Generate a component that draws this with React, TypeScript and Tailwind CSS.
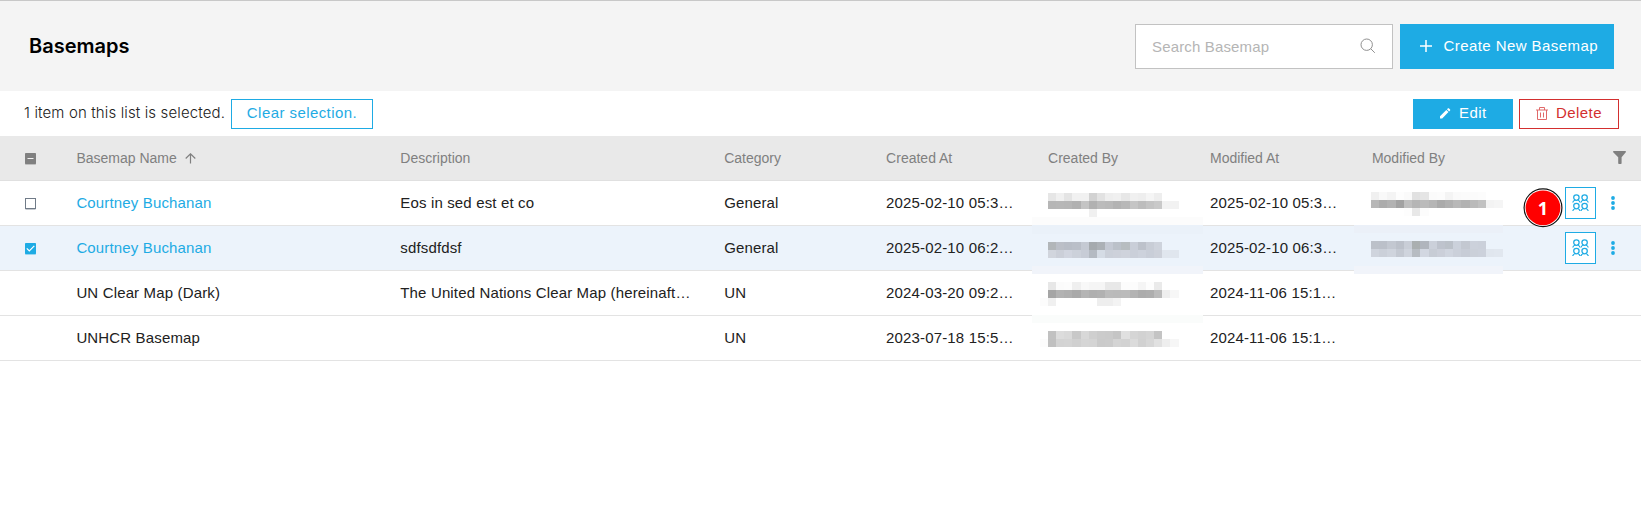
import React from "react";

type Mosaic = { x: number; y: number; pitch: number; rows: string[][] };

const mosaics: Mosaic[] = [
  { x: 1048, y: 193, pitch: 8.15, rows: [
    ["e6","f0","e4","f1","f1","d2","e2","ee","f0","e7","f0","ee","f5","ee"],
    ["b6","b7","b6","b1","c4","b1","bb","b9","b3","b8","c5","bd","c4","c9","f2","f2"],
    ["","","","","","f0"],
  ] },
  { x: 1048, y: 242, pitch: 8.15, rows: [
    ["b2b6b9","bbbfc7","b8bdc6","babfc8","c5cad3","a5aaae","acb1b6","c4c9d3","bbc1c9","b7bdc0","c9ced8","bdc2cb","c8cdd6","ced3dc"],
    ["d1d5dd","cbcfd8","d1d5df","ccd1da","c7ccd6","b4bac2","d5dce5","cbd0d9","cdd1da","cfd3dc","cacfd9","cdd2dc","c9ced8","cdd1da","e0e6ee","e0e6ee"],
  ] },
  { x: 1048, y: 282, pitch: 8.15, rows: [
    ["e7","fb","fc","ef","f8","f5","f5","e8","e8","fc","fc","f5","fd","ea"],
    ["a5","b2","af","a9","b4","af","b1","bb","ba","bb","b3","ac","ae","bb","ee","f7"],
    ["f0","","","","","","ee","ee","f3"],
  ] },
  { x: 1048, y: 331, pitch: 8.15, rows: [
    ["c1","dc","d9","c8","d8","cf","cb","ca","c5","e0","d5","d2","d5","c4"],
    ["c0","d3","d4","d0","d5","d4","ca","cb","d4","d2","db","d1","d7","e1","ee","f6"],
  ] },
  { x: 1371, y: 192, pitch: 8.22, rows: [
    ["f0","f9","f4","fd","fa","e1","e5","fb","fc","f4","fa","fb","fb","fc"],
    ["b7","ac","b2","a2","bf","b5","bb","b5","aa","b0","b8","b2","ba","c1","f3","f5"],
    ["","","","","fd","e8","fc"],
  ] },
  { x: 1371, y: 241, pitch: 8.22, rows: [
    ["bcc1c9","bbc0c9","c3c8d1","bcc1ca","c9ced7","aaafb0","b0b5bd","cbd0da","bec3cd","bbc1c9","cbd1db","c3c8d1","ccd1db","cbd0da"],
    ["cfd4dd","cbd0d9","cfd4dd","c4c9d2","cfd4dd","b7bcc2","d2d7e1","c7ccd5","cbcfd9","d0d5df","cbd0da","c7ccd6","cbd0d9","ccd1db","e0e6ee","e1e7ef"],
  ] },
];

function MosaicBlock({ m }: { m: Mosaic }) {
  return (
    <svg className="pointer-events-none absolute" style={{ left: m.x, top: m.y }} width="132" height="25" shapeRendering="crispEdges">
      {m.rows.map((r, j) =>
        r.map((c, i) =>
          c ? (
            <rect key={`${j}-${i}`} x={i * m.pitch} y={j * 8.15} width={m.pitch + 0.1} height={8.15} fill={"#" + (c.length === 2 ? c + c + c : c)} />
          ) : null
        )
      )}
    </svg>
  );
}

function Person({ x, y }: { x: number; y: number }) {
  return (
    <g transform={`translate(${x} ${y})`}>
      <circle cx="4" cy="3.1" r="2.7" />
      <path d="M.4 8C.5 6.600 1.500 5.900 2.900 5.500M7.600 8C7.500 6.600 6.500 5.900 5.100 5.500" />
    </g>
  );
}

function People() {
  return (
    <svg width="17" height="18" viewBox="0 0 17 18" fill="none" stroke="#1eabe4" strokeWidth="1.25">
      <Person x={0.4} y={0.5} />
      <Person x={8.6} y={0.5} />
      <Person x={0.4} y={9} />
      <Person x={8.6} y={9} />
    </svg>
  );
}

function Box({ kind }: { kind: string }) {
  if (kind === "mixed")
    return (
      <svg width="11" height="12" viewBox="0 0 11 12">
        <rect y="1" width="11" height="11" rx="1" fill="#808080" opacity=".4" />
        <rect width="11" height="11" rx=".7" fill="#808080" />
        <path d="M2.500 5.500h6" stroke="#f2f2f2" />
      </svg>
    );
  if (kind === "checked")
    return (
      <svg width="11" height="12" viewBox="0 0 11 12" fill="none">
        <rect y="1" width="11" height="11" rx="1" fill="#1eabe4" opacity=".4" />
        <rect width="11" height="11" rx=".7" fill="#1eabe4" />
        <path d="M1.800 5.300l2.500 2.500 5-5" stroke="#fff" strokeWidth="1.200" />
      </svg>
    );
  return (
    <svg width="11" height="12" viewBox="0 0 11 12" fill="none">
      <path d="M.5 11.500h10" stroke="#707b88" opacity=".4" />
      <rect x=".5" y=".5" width="10" height="10" stroke="#707b88" />
    </svg>
  );
}

const rows = [
  { name: "Courtney Buchanan", desc: "Eos in sed est et co", cat: "General", c: "2025-02-10 05:3…", m: "2025-02-10 05:3…", box: "empty" },
  { name: "Courtney Buchanan", desc: "sdfsdfdsf", cat: "General", c: "2025-02-10 06:2…", m: "2025-02-10 06:3…", box: "checked" },
  { name: "UN Clear Map (Dark)", desc: "The United Nations Clear Map (hereinaft…", cat: "UN", c: "2024-03-20 09:2…", m: "2024-11-06 15:1…", box: "" },
  { name: "UNHCR Basemap", desc: "", cat: "UN", c: "2023-07-18 15:5…", m: "2024-11-06 15:1…", box: "" },
];

const cols = "grid grid-cols-[76.4px_323.9px_323.9px_161.95px_161.95px_161.95px_161.95px_1fr] items-center whitespace-nowrap";

export default function App() {
  return (
    <div className="relative h-[521px] w-full overflow-hidden bg-white font-['Liberation_Sans',Arial,sans-serif] text-[#212121]">
      <header className="flex h-[91px] items-center justify-between border-t border-[#c8c8c8] bg-[#f4f4f4] pl-[29px] pr-[27px]">
        <h1 className="font-['Inter',sans-serif] text-[20px] font-semibold leading-6 text-black">Basemaps</h1>
        <div className="flex gap-[7px]">
          <div className="flex h-[45px] w-[258px] items-center justify-between border border-[#c2c2c2] bg-white px-4">
            <span className="pt-0.5 text-[15px] tracking-[0.15px] text-[#b5b5b5]">Search Basemap</span>
            <svg width="16" height="16" viewBox="0 0 16 16" fill="none" stroke="#909090" strokeWidth="1">
              <circle cx="6.7" cy="6.7" r="5.7" />
              <path d="M10.8 10.800l4 4" />
            </svg>
          </div>
          <button className="flex h-[45px] w-[214px] items-center whitespace-nowrap bg-[#1eabe4] pl-5 text-[15px] tracking-[0.43px] text-white">
            <svg width="12" height="12" viewBox="0 0 12 12" stroke="#fff" strokeWidth="1.5" className="mr-[11.5px] shrink-0">
              <path d="M6 0v12M0 6h12" />
            </svg>
            Create New Basemap
          </button>
        </div>
      </header>

      <div className="flex h-[45px] items-center justify-between pl-6 pr-[22px]">
        <div className="flex items-center">
          <span className="w-[207px] whitespace-nowrap font-['Inter',sans-serif] text-[15px] font-light tracking-[0.13px]">1 item on this list is selected.</span>
          <button className="h-[30px] w-[142px] border border-[#1eabe4] text-[15px] tracking-[0.43px] text-[#1eabe4]">Clear selection.</button>
        </div>
        <div className="flex gap-1.5">
          <button className="flex h-[30px] w-[100px] items-center bg-[#1eabe4] pb-px pl-[27px] text-[15px] tracking-[0.43px] text-white">
            <svg width="11" height="11" viewBox="0 0 11 11" fill="#fff" className="mr-2">
              <path d="M0 8.200L6.300 1.900l2.200 2.200L2.200 10.400H0zM7 1.300l1-1q.4-.3.8 0l1.300 1.300q.4.4 0 .8l-1 1z" />
            </svg>
            Edit
          </button>
          <button className="flex h-[30px] w-[100px] items-center border border-[#d32f2f] pb-px pl-4 text-[15px] tracking-[0.43px] text-[#d32f2f]">
            <svg width="12" height="14" viewBox="0 0 12 14" fill="none" stroke="#e06a6a" className="mr-2 mt-0.5">
              <path d="M0 3h12M3.500 3V.5h5V3M1.500 3v9.500h9V3M4.500 5.500v5M7.500 5.500v5" />
            </svg>
            Delete
          </button>
        </div>
      </div>

      <div className={`${cols} h-[45px] border-b border-[#e0e0e0] bg-[#e9e9e9] text-[14px] text-[#808080]`}>
        <div className="pl-[25px] pt-px">
          <Box kind="mixed" />
        </div>
        <div className="flex items-center">
          Basemap Name
          <svg width="11" height="11" viewBox="0 0 11 11" fill="none" stroke="#808080" strokeWidth="1.2" className="ml-2 mt-px">
            <path d="M5.500 10.500V1M.7 5.500L5.500.8l4.800 4.700" />
          </svg>
        </div>
        <div>Description</div>
        <div>Category</div>
        <div>Created At</div>
        <div>Created By</div>
        <div>Modified At</div>
        <div className="flex items-center justify-between pr-[15px]">
          Modified By
          <svg width="13" height="13" viewBox="0 0 13 13" fill="#808080" className="-mt-px">
            <path d="M.2 0h12.600v1.200L8.600 6.200V12.200q0 .8-.8.8H6q-.8 0-.8-.8V6.200L.2 1.200z" />
          </svg>
        </div>
      </div>
      {rows.map((r, i) => (
        <div key={i} className={`${cols} h-[45px] border-b border-[#e3e3e3] text-[15px] tracking-[0.15px] ${r.box === "checked" ? "bg-[#ecf3fb]" : ""}`}>
          <div className="pl-[25px] pt-px">{r.box && <Box kind={r.box} />}</div>
          <div className={r.box ? "text-[#1eabe4]" : ""}>{r.name}</div>
          <div>{r.desc}</div>
          <div>{r.cat}</div>
          <div>{r.c}</div>
          <div />
          <div>{r.m}</div>
          <div className="flex items-center justify-end pr-[26px]">
            {r.box && (
              <>
                <button className="flex h-8 w-[31px] items-center justify-center border border-[#1eabe4] bg-white">
                  <People />
                </button>
                <svg width="4" height="14" viewBox="0 0 4 14" fill="#1eabe4" className="ml-[15px]">
                  <circle cx="2" cy="2" r="1.9" />
                  <circle cx="2" cy="7" r="1.9" />
                  <circle cx="2" cy="12" r="1.9" />
                </svg>
              </>
            )}
          </div>
        </div>
      ))}

      <div className="absolute left-[1032px] top-[217px] h-[8px] w-[171px] bg-[#fcfcfc]" />
      <div className="absolute left-[1032px] top-[225px] h-[9px] w-[171px] bg-[#eaf1f9]" />
      <div className="absolute left-[1032px] top-[266px] h-[8px] w-[171px] bg-[#f1f4fa]" />
      <div className="absolute left-[1032px] top-[315px] h-[8px] w-[171px] bg-[#fafcfb]" />
      <div className="absolute left-[1354px] top-[225px] h-[8px] w-[149px] bg-[#ebf0f8]" />
      <div className="absolute left-[1354px] top-[266px] h-[8px] w-[149px] bg-[#f1f4fa]" />
      <div className="absolute left-[1040px] top-[298px] h-[8px] w-[8px] bg-[#fcfcfc]" />
      <div className="absolute left-[1040px] top-[339px] h-[8px] w-[8px] bg-[#fcfcfc]" />
      {mosaics.map((m, i) => <MosaicBlock key={i} m={m} />)}

      <div className="absolute left-[1523px] top-[188px] flex size-10 items-center justify-center">
        <svg className="absolute inset-0" width="40" height="40" viewBox="0 0 40 40">
          <circle cx="20" cy="19.8" r="19.7" fill="#fff" />
          <circle cx="20" cy="19.8" r="18.9" fill="#fff" stroke="#111" strokeWidth="1.2" />
          <circle cx="20" cy="19.8" r="17.4" fill="#f00" />
        </svg>
        <span className="relative font-['Noto_Sans',sans-serif] text-[18px] font-bold leading-none text-white">1</span>
      </div>
    </div>
  );
}
